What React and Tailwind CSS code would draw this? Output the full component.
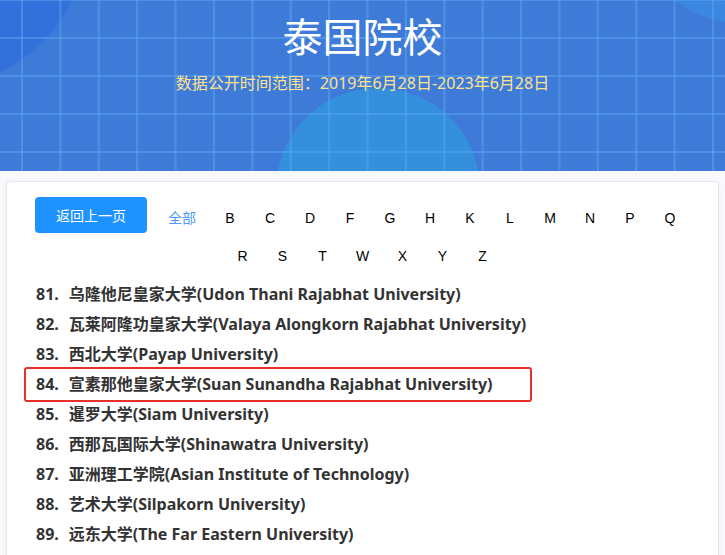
import React from "react";

const letters = ["B", "C", "D", "F", "G", "H", "K", "L", "M", "N", "P", "Q", "R", "S", "T", "W", "X", "Y", "Z"];

const schools = [
  { no: 81, name: "乌隆他尼皇家大学(Udon Thani Rajabhat University)" },
  { no: 82, name: "瓦莱阿隆功皇家大学(Valaya Alongkorn Rajabhat University)" },
  { no: 83, name: "西北大学(Payap University)" },
  { no: 84, name: "宣素那他皇家大学(Suan Sunandha Rajabhat University)", marked: true },
  { no: 85, name: "暹罗大学(Siam University)" },
  { no: 86, name: "西那瓦国际大学(Shinawatra University)" },
  { no: 87, name: "亚洲理工学院(Asian Institute of Technology)" },
  { no: 88, name: "艺术大学(Silpakorn University)" },
  { no: 89, name: "远东大学(The Far Eastern University)" },
];

function Banner() {
  return (
    <div className="relative h-[171px] overflow-hidden bg-[#3e7bd9]">
      {/* 背景装饰圆 */}
      <div className="absolute left-[-205px] top-[-205px] h-[290px] w-[290px] rounded-full bg-[#3270dc]" />
      <div className="absolute left-[637px] top-[-183px] h-[206px] w-[206px] rounded-full bg-[#3b87e2]" />
      <div className="absolute left-[276px] top-[88px] h-[204px] w-[204px] rounded-full bg-[#3490dd]" />
      {/* 网格线 */}
      <div className="absolute inset-0 bg-[linear-gradient(to_right,rgba(88,164,236,0.55)_2px,transparent_2px),linear-gradient(to_bottom,rgba(88,164,236,0.55)_2px,transparent_2px)] bg-[size:38.4px_38px] bg-[position:21px_37px]" />
      <div className="relative flex flex-col items-center">
        <h1 className="mt-[13px] text-[40px] leading-[48px] text-white">泰国院校</h1>
        <p className="mt-[11px] text-[16px] leading-[22px] text-[#ffe38c]">数据公开时间范围：2019年6月28日-2023年6月28日</p>
      </div>
    </div>
  );
}

export default function App() {
  return (
    <div
      className="min-h-[555px] bg-[#f9f9fb]"
      style={{ fontFamily: '"Noto Sans", "Noto Sans CJK SC", sans-serif' }}
    >
      <Banner />

      <div className="mx-[6px] mt-[10px] rounded border border-[#e6e6ee] bg-white pb-6 shadow-[0_1px_4px_rgba(0,0,0,0.05)]">
        <div className="flex flex-wrap justify-center px-[20px] pt-[15px]">
          <button className="mr-[7px] h-[36px] w-[112px] rounded bg-[#1e93ff] text-[14px] text-white">返回上一页</button>
          <span className="flex h-[36px] w-[56px] items-center justify-center pt-[4px] text-[14px] text-[#4d9cf8]">全部</span>
          {letters.map((l) => (
            <span
              key={l}
              className="flex h-[38px] w-[40px] items-center justify-center pt-[4px] text-[14px] text-black"
              style={{ fontFamily: '"Liberation Sans", Arial, sans-serif' }}
            >
              {l}
            </span>
          ))}
        </div>

        <ul className="mt-[6px] px-[29px]">
          {schools.map((s) => (
            <li key={s.no} className="flex h-[30px] items-center text-[16px] font-bold text-[#333]">
              <span className="relative">
                {s.marked && (
                  <span className="absolute -left-[12px] -right-[39px] -top-[5px] -bottom-[6px] rounded-[3px] border-2 border-[#e8302a]" />
                )}
                <span className="mr-[10px]">{s.no}.</span>
                {s.name}
              </span>
            </li>
          ))}
        </ul>
      </div>
    </div>
  );
}
